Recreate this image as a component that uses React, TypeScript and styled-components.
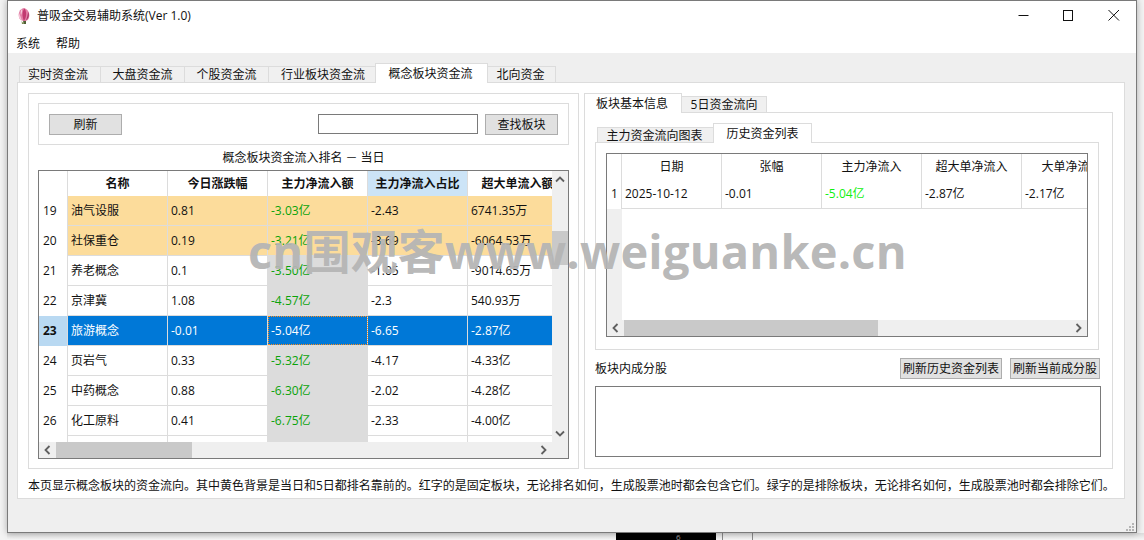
import React from "react";
import styled, { createGlobalStyle } from "styled-components";

const Global = createGlobalStyle`
  html, body { margin: 0; padding: 0; background: #f3f3f3; }
  * { box-sizing: border-box; }
`;

const Root = styled.div`
  position: relative;
  width: 1144px;
  height: 540px;
  padding-left: 7px;
  overflow: hidden;
  background: #f3f3f3;
  font-family: "Open Sans", "Noto Sans CJK SC", sans-serif;
  font-size: 12px;
  line-height: 16px;
  color: #111;
`;

const Win = styled.div`
  width: 1130px;
  height: 533px;
  border: 1px solid #7a7a7a;
  background: #efefef;
  box-shadow: 0 0 7px rgba(0, 0, 0, 0.3);
  display: flex;
  flex-direction: column;
  position: relative;
`;

const TitleBar = styled.div`
  height: 30px;
  background: #fff;
  display: flex;
  align-items: center;
  padding-left: 8px;
`;

const TitleText = styled.span`
  flex: 1;
  margin-left: 5px;
`;

const WinControl = styled.div`
  width: 45px;
  height: 30px;
  display: flex;
  align-items: center;
  justify-content: center;
`;

const MenuBar = styled.div`
  height: 22px;
  background: #fff;
  display: flex;
  align-items: center;
  padding: 3px 0 0 8px;
  gap: 16px;
`;

const Body = styled.div`
  flex: 1;
  padding: 10px 10px 0 9px;
  display: flex;
  flex-direction: column;
`;

const TabStrip = styled.div<{ $ml?: number }>`
  display: flex;
  align-items: flex-end;
  margin-left: ${(p) => p.$ml ?? 0}px;
  margin-bottom: -1px;
  position: relative;
  z-index: 1;
`;

const Tab = styled.div<{ $w: number; $active?: boolean; $h?: number; $shift?: number }>`
  width: ${(p) => p.$w}px;
  height: ${(p) => (p.$active ? (p.$h ?? 20) : (p.$h ?? 20) - 3)}px;
  display: flex;
  align-items: center;
  justify-content: center;
  background: ${(p) => (p.$active ? "#fff" : "#f0f0f0")};
  border: 1px solid #dcdcdc;
  border-bottom: ${(p) => (p.$active ? "none" : "1px solid #dcdcdc")};
  margin-right: -1px;
  padding-top: ${(p) => (p.$active ? 0 : 1)}px;
  padding-right: ${(p) => Math.max(0, -(p.$shift ?? 0)) * 2}px;
  padding-left: ${(p) => Math.max(0, p.$shift ?? 0) * 2}px;
`;

const MainPanel = styled.div`
  width: 1108px;
  height: 417px;
  background: #fff;
  border: 1px solid #dcdcdc;
  padding: 10px 0 0 10px;
`;

const Columns = styled.div`
  display: flex;
  gap: 5px;
`;

const LeftGroup = styled.div`
  width: 551px;
  height: 376px;
  border: 1px solid #dcdcdc;
  padding: 9px 9px 8px;
  display: flex;
  flex-direction: column;
`;

const SearchFrame = styled.div`
  height: 42px;
  flex: none;
  border: 1px solid #dcdcdc;
  padding: 10px 10px 0;
  display: flex;
  align-items: flex-start;
`;

const Btn = styled.div<{ $w: number; $h?: number }>`
  width: ${(p) => p.$w}px;
  height: ${(p) => p.$h ?? 21}px;
  background: #e1e1e1;
  border: 1px solid #adadad;
  padding-top: 1px;
  display: flex;
  align-items: center;
  justify-content: center;
  flex: none;
`;

const SearchInput = styled.div`
  width: 160px;
  height: 20px;
  border: 1px solid #7a7a7a;
  background: #fff;
  margin-left: auto;
  margin-right: 7px;
`;

const Caption = styled.div`
  height: 25px;
  flex: none;
  display: flex;
  align-items: center;
  justify-content: center;
  padding-top: 1px;
`;

const TableFrame = styled.div<{ $h: number }>`
  height: ${(p) => p.$h}px;
  flex: none;
  border: 1px solid #7a7a7a;
  display: flex;
  flex-direction: column;
  background: #fff;
`;

const TableMiddle = styled.div`
  flex: 1;
  min-height: 0;
  display: flex;
`;

const Viewport = styled.div`
  flex: 1;
  min-width: 0;
  overflow: hidden;
  display: flex;
  flex-direction: column;
`;

const Row = styled.div<{ $h: number; $bg?: string; $line?: boolean }>`
  height: ${(p) => p.$h}px;
  flex: none;
  display: flex;
  background: ${(p) => p.$bg ?? "#fff"};
  border-bottom: ${(p) => (p.$line ? "1px solid #dcdcdc" : "none")};
`;

const RowHead = styled.div<{ $w: number; $selected?: boolean }>`
  width: ${(p) => p.$w}px;
  flex: none;
  background: ${(p) => (p.$selected ? "#b9d9f2" : "#fff")};
  color: #111;
  border-right: 1px solid #dcdcdc;
  margin-bottom: -1px;
  display: flex;
  align-items: center;
  padding-left: 4px;
  font-weight: ${(p) => (p.$selected ? 700 : 400)};
`;

const HeadCell = styled.div<{ $bold?: boolean; $bg?: string }>`
  width: 100px;
  flex: none;
  background: ${(p) => p.$bg ?? "#fff"};
  border-right: 1px solid #dcdcdc;
  display: flex;
  align-items: center;
  justify-content: center;
  white-space: nowrap;
  font-weight: ${(p) => (p.$bold ? 700 : 400)};
`;

const Cell = styled.div<{ $color?: string; $bg?: string; $focus?: boolean }>`
  width: 100px;
  flex: none;
  color: ${(p) => p.$color ?? "inherit"};
  background: ${(p) => p.$bg ?? "transparent"};
  border-right: 1px solid #dcdcdc;
  display: flex;
  align-items: center;
  padding-left: 3px;
  white-space: nowrap;
  outline: ${(p) => (p.$focus ? "1px dotted #ff8c1a" : "none")};
  outline-offset: -1px;
`;

const Filler = styled.div<{ $w: number }>`
  flex: 1;
  width: ${(p) => p.$w}px;
  background: #efefef;
`;

const VScroll = styled.div`
  width: 16px;
  flex: none;
  background: #efefef;
  display: flex;
  flex-direction: column;
`;

const VThumb = styled.div`
  height: 34px;
  margin: 43px 0 auto;
  background: #c9c9c9;
`;

const HScroll = styled.div<{ $mr?: number }>`
  height: 16px;
  flex: none;
  margin-right: ${(p) => p.$mr ?? 0}px;
  background: #efefef;
  display: flex;
  justify-content: space-between;
`;

const CornerWrap = styled.div`
  flex: none;
  background: #efefef;
`;

const HThumb = styled.div<{ $w: number }>`
  width: ${(p) => p.$w}px;
  background: #c9c9c9;
  margin-right: auto;
`;

const Arrow = styled.div`
  width: 17px;
  height: 16px;
  flex: none;
  display: flex;
  align-items: center;
  justify-content: center;
`;

const VArrow = styled(Arrow)`
  width: 16px;
  height: 17px;
`;

const Note = styled.div`
  padding-top: 4px;
  height: 30px;
  display: flex;
  align-items: center;
  white-space: nowrap;
`;

const RightGroup = styled.div`
  width: 529px;
  display: flex;
  flex-direction: column;
`;

const SubPanel = styled.div`
  height: 357px;
  border: 1px solid #dcdcdc;
  background: #fff;
  padding: 10px 10px 0 10px;
`;

const InnerPanel = styled.div`
  width: 504px;
  height: 208px;
  border: 1px solid #dcdcdc;
  padding: 10px;
`;

const SectionRow = styled.div`
  display: flex;
  align-items: center;
  width: 505px;
  margin-top: 8px;
  gap: 8px;
`;

const SectionLabel = styled.span`
  flex: 1;
  padding-top: 1px;
`;

const ListBox = styled.div`
  width: 506px;
  height: 71px;
  margin-top: 7px;
  border: 1px solid #7a7a7a;
  background: #fff;
`;

const BottomStrip = styled.div`
  height: 7px;
  display: flex;
  align-items: stretch;
  background: linear-gradient(#dcdcdc, #f6f6f6);
`;

const BlackTask = styled.div`
  width: 100px;
  margin-left: 609px;
  background: #000;
  color: #9a9a9a;
  font-size: 8px;
  line-height: 7px;
  padding-left: 60px;
`;

const TaskLine = styled.div<{ $ml: number }>`
  width: 1px;
  margin-left: ${(p) => p.$ml}px;
  background: #888;
`;

const Watermark = styled.div`
  position: absolute;
  left: 248px;
  top: 219px;
  font-family: "Open Sans", "Noto Sans CJK SC", sans-serif;
  font-size: 47px;
  line-height: 64px;
  font-weight: 700;
  letter-spacing: 0.2px;
  color: rgba(181, 181, 181, 0.96);
  white-space: nowrap;
  pointer-events: none;
`;

const Grip = styled.svg`
  position: absolute;
  right: 1px;
  bottom: 0;
`;

const Chev = ({ dir }: { dir: "l" | "r" | "u" | "d" }) => {
  const d = {
    l: "M6.5 1 L2.5 5 L6.5 9",
    r: "M2.5 1 L6.5 5 L2.5 9",
    u: "M1 6.5 L5 2.5 L9 6.5",
    d: "M1 2.5 L5 6.5 L9 2.5",
  }[dir];
  return (
    <svg width="10" height="10" viewBox="0 0 10 10">
      <path d={d} fill="none" stroke="#606060" strokeWidth="1.8" />
    </svg>
  );
};

const Flower = () => (
  <svg width="16" height="18" viewBox="0 0 16 18" style={{ flex: "none" }}>
    <path d="M7 13 L7.5 17 L10 17 L10 13 Z" fill="#4f5f34" />
    <path d="M5.5 14 L8 17 L6 17 Z" fill="#7a8a4a" />
    <path d="M8 1 C3.5 1.5 1.5 7 3.5 11.5 C5 14.5 10.5 15 12.5 12 C14.5 8 13 2.5 8 1 Z" fill="#e27fa6" />
    <path d="M8.5 1.5 C6 4 5.8 9.5 8 14 C10.5 10.5 11 4.5 8.5 1.5 Z" fill="#c23a70" />
    <path d="M3 6 C2 8.5 3 12 6 13.8 C5 11 4 8 3 6 Z" fill="#f4c4d6" />
    <path d="M6 2 C4.6 3.5 4.4 6 5 8 C5.8 6 6.3 4 6 2 Z" fill="#f6d2df" />
    <path d="M12.2 5 C13.6 8 12.6 11.5 10 13.6 C11 11 11.8 8 12.2 5 Z" fill="#a83466" />
  </svg>
);

const ORANGE = "#fcdc9b";
const BLUE = "#0078d7";
const GREEN = "#0aa30a";

type R = { n: number; name: string; chg: string; main: string; pct: string; big: string };

const rows: R[] = [
  { n: 19, name: "油气设服", chg: "0.81", main: "-3.03亿", pct: "-2.43", big: "6741.35万" },
  { n: 20, name: "社保重仓", chg: "0.19", main: "-3.21亿", pct: "-3.69", big: "-6064.53万" },
  { n: 21, name: "养老概念", chg: "0.1", main: "-3.50亿", pct: "-1.05", big: "-9014.65万" },
  { n: 22, name: "京津冀", chg: "1.08", main: "-4.57亿", pct: "-2.3", big: "540.93万" },
  { n: 23, name: "旅游概念", chg: "-0.01", main: "-5.04亿", pct: "-6.65", big: "-2.87亿" },
  { n: 24, name: "页岩气", chg: "0.33", main: "-5.32亿", pct: "-4.17", big: "-4.33亿" },
  { n: 25, name: "中药概念", chg: "0.88", main: "-6.30亿", pct: "-2.02", big: "-4.28亿" },
  { n: 26, name: "化工原料", chg: "0.41", main: "-6.75亿", pct: "-2.33", big: "-4.00亿" },
  { n: 27, name: "", chg: "", main: "", pct: "", big: "" },
];

export default function App() {
  return (
    <Root>
      <Global />
      <Win>
        <TitleBar>
          <Flower />
          <TitleText>普吸金交易辅助系统(Ver 1.0)</TitleText>
          <WinControl>
            <svg width="12" height="12" viewBox="0 0 12 12">
              <path d="M0.5 5.5 H10.5" stroke="#111" strokeWidth="1" />
            </svg>
          </WinControl>
          <WinControl>
            <svg width="12" height="12" viewBox="0 0 12 12">
              <rect x="0.5" y="0.5" width="9" height="10" fill="none" stroke="#111" strokeWidth="1" />
            </svg>
          </WinControl>
          <WinControl>
            <svg width="12" height="12" viewBox="0 0 12 12">
              <path d="M0.5 0 L11 10.5 M11 0 L0.5 10.5" stroke="#111" strokeWidth="1" />
            </svg>
          </WinControl>
        </TitleBar>
        <MenuBar>
          <span>系统</span>
          <span>帮助</span>
        </MenuBar>
        <Body>
          <TabStrip $ml={2}>
            <Tab $w={82} $shift={-2}>实时资金流</Tab>
            <Tab $w={85}>大盘资金流</Tab>
            <Tab $w={85}>个股资金流</Tab>
            <Tab $w={108} $shift={1}>行业板块资金流</Tab>
            <Tab $w={113} $active $shift={-1}>
              概念板块资金流
            </Tab>
            <Tab $w={69} $shift={-1}>北向资金</Tab>
          </TabStrip>
          <MainPanel>
            <Columns>
              <LeftGroup>
                <SearchFrame>
                  <Btn $w={73}>刷新</Btn>
                  <SearchInput />
                  <Btn $w={73}>查找板块</Btn>
                </SearchFrame>
                <Caption>概念板块资金流入排名 － 当日</Caption>
                <TableFrame $h={289}>
                  <TableMiddle>
                    <Viewport>
                      <Row $h={25}>
                        <RowHead $w={29} />
                        <HeadCell $bold>名称</HeadCell>
                        <HeadCell $bold>今日涨跌幅</HeadCell>
                        <HeadCell $bold>主力净流入额</HeadCell>
                        <HeadCell $bold $bg="#cce4f7">
                          主力净流入占比
                        </HeadCell>
                        <HeadCell $bold>超大单流入额</HeadCell>
                      </Row>
                      {rows.map((r, i) => {
                        const sel = r.n === 23;
                        const hi = r.n < 21;
                        return (
                          <Row key={r.n} $h={30} $line $bg={sel ? BLUE : hi ? ORANGE : "#fff"}>
                            <RowHead $w={29} $selected={sel}>
                              {i < 8 ? r.n : ""}
                            </RowHead>
                            <Cell $color={sel ? "#fff" : undefined}>{r.name}</Cell>
                            <Cell $color={sel ? "#fff" : undefined}>{r.chg}</Cell>
                            <Cell
                              $color={sel ? "#fff" : GREEN}
                              $bg={!sel && !hi ? "#dcdcdc" : undefined}
                              $focus={sel}
                            >
                              {r.main}
                            </Cell>
                            <Cell $color={sel ? "#fff" : undefined}>{r.pct}</Cell>
                            <Cell $color={sel ? "#fff" : undefined}>{r.big}</Cell>
                          </Row>
                        );
                      })}
                    </Viewport>
                    <VScroll>
                      <VArrow>
                        <Chev dir="u" />
                      </VArrow>
                      <VThumb />
                      <VArrow>
                        <Chev dir="d" />
                      </VArrow>
                    </VScroll>
                  </TableMiddle>
                  <CornerWrap>
                    <HScroll $mr={16}>
                      <Arrow>
                        <Chev dir="l" />
                      </Arrow>
                      <HThumb $w={136} />
                      <Arrow>
                        <Chev dir="r" />
                      </Arrow>
                    </HScroll>
                  </CornerWrap>
                </TableFrame>
              </LeftGroup>
              <RightGroup>
                <TabStrip>
                  <Tab $w={98} $active $shift={-1}>
                    板块基本信息
                  </Tab>
                  <Tab $w={86}>5日资金流向</Tab>
                </TabStrip>
                <SubPanel>
                  <TabStrip $ml={2}>
                    <Tab $w={117} $h={19} $shift={-1}>
                      主力资金流向图表
                    </Tab>
                    <Tab $w={99} $h={20} $active>
                      历史资金列表
                    </Tab>
                  </TabStrip>
                  <InnerPanel>
                    <TableFrame $h={184}>
                      <TableMiddle>
                        <Viewport>
                          <Row $h={25}>
                            <RowHead $w={15} />
                            <HeadCell>日期</HeadCell>
                            <HeadCell>张幅</HeadCell>
                            <HeadCell>主力净流入</HeadCell>
                            <HeadCell>超大单净流入</HeadCell>
                            <HeadCell>大单净流入</HeadCell>
                          </Row>
                          <Row $h={30} $line>
                            <RowHead $w={15}>1</RowHead>
                            <Cell>2025-10-12</Cell>
                            <Cell>-0.01</Cell>
                            <Cell $color="#10f010">-5.04亿</Cell>
                            <Cell>-2.87亿</Cell>
                            <Cell>-2.17亿</Cell>
                          </Row>
                          <Filler $w={15} />
                        </Viewport>
                      </TableMiddle>
                      <HScroll>
                        <Arrow>
                          <Chev dir="l" />
                        </Arrow>
                        <HThumb $w={254} />
                        <Arrow>
                          <Chev dir="r" />
                        </Arrow>
                      </HScroll>
                    </TableFrame>
                  </InnerPanel>
                  <SectionRow>
                    <SectionLabel>板块内成分股</SectionLabel>
                    <Btn $w={102}>刷新历史资金列表</Btn>
                    <Btn $w={90}>刷新当前成分股</Btn>
                  </SectionRow>
                  <ListBox />
                </SubPanel>
              </RightGroup>
            </Columns>
            <Note>
              本页显示概念板块的资金流向。其中黄色背景是当日和5日都排名靠前的。红字的是固定板块，无论排名如何，生成股票池时都会包含它们。绿字的是排除板块，无论排名如何，生成股票池时都会排除它们。
            </Note>
          </MainPanel>
        </Body>
        <Grip width="10" height="10" viewBox="0 0 10 10">
          <g fill="#b5b5b5">
            <rect x="7" y="1" width="2" height="2" />
            <rect x="4" y="4" width="2" height="2" />
            <rect x="7" y="4" width="2" height="2" />
            <rect x="1" y="7" width="2" height="2" />
            <rect x="4" y="7" width="2" height="2" />
            <rect x="7" y="7" width="2" height="2" />
          </g>
        </Grip>
      </Win>
      <BottomStrip>
        <BlackTask>6</BlackTask>
        <TaskLine $ml={6} />
        <TaskLine $ml={29} />
      </BottomStrip>
      <Watermark>cn围观客www.weiguanke.cn</Watermark>
    </Root>
  );
}
